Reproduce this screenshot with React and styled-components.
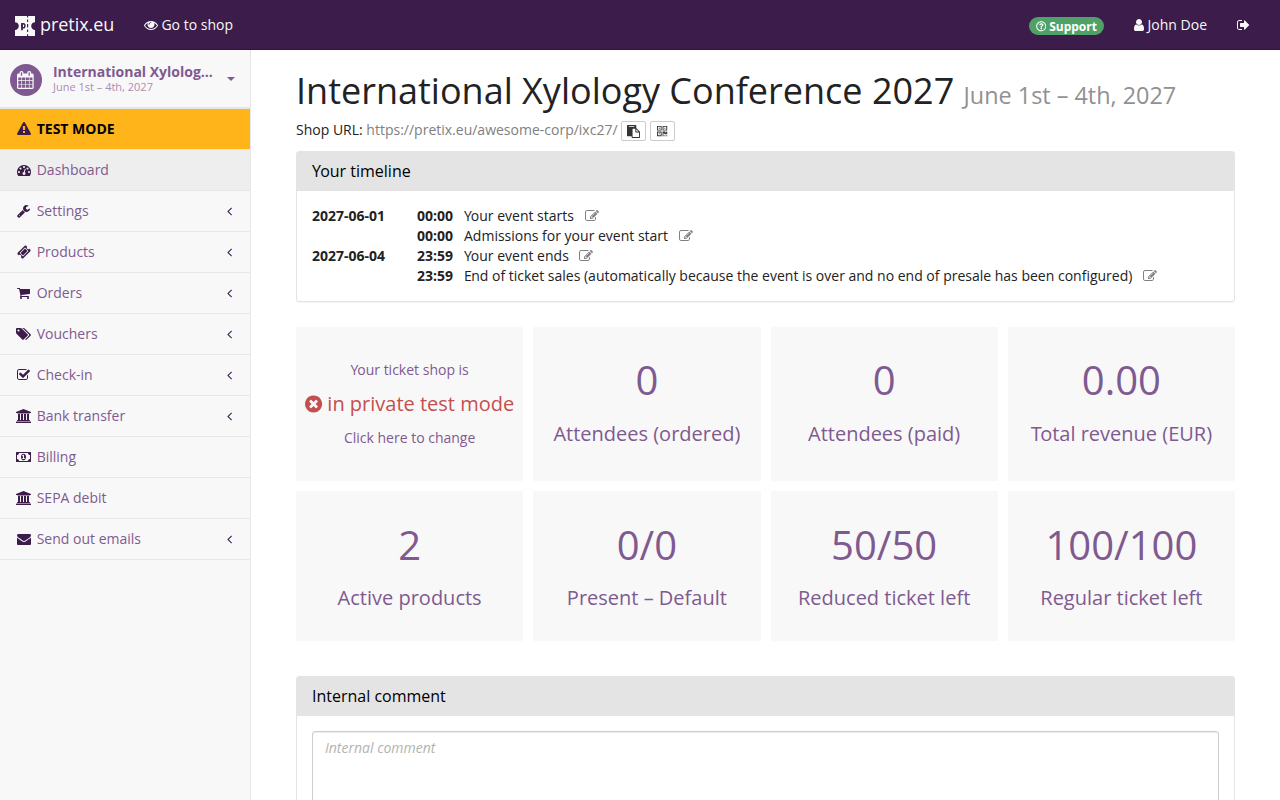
import React from 'react';
import styled, { createGlobalStyle, css } from 'styled-components';
import { FaRegQuestionCircle } from 'react-icons/fa';

const GlobalStyle = createGlobalStyle`
  *, *::before, *::after { box-sizing: border-box; }
  html, body { margin: 0; padding: 0; }
  body {
    font-family: "Open Sans", "Noto Sans", sans-serif;
    font-size: 14px;
    line-height: 20px;
    color: #222;
    background: #fff;
    height: 800px;
    overflow: hidden;
  }
`;

/* Glyphs: [viewBox x, viewBox width, path]; all are 1792 units high. */
const ICONS = {
  eye: [0, 1792, 'M1664 960q-152-236-381-353 61 104 61 225 0 185-131.5 316.5t-316.5 131.5-316.5-131.5-131.5-316.5q0-121 61-225-229 117-381 353 133 205 333.5 326.5t434.5 121.5 434.5-121.5 333.5-326.5zm-720-384q0-20-14-34t-34-14q-125 0-214.5 89.5t-89.5 214.5q0 20 14 34t34 14 34-14 14-34q0-86 61-147t147-61q20 0 34-14t14-34zm848 384q0 34-20 69-140 230-376.5 368.5t-499.5 138.5-499.5-139-376.5-368q-20-35-20-69t20-69q140-229 376.5-368t499.5-139 499.5 139 376.5 368q20 35 20 69z'],
  user: [256, 1280, 'M1536 1399q0 109-62.5 187t-150.5 78h-854q-88 0-150.5-78t-62.5-187q0-85 8.5-160.5t31.5-152 58.5-131 94-89 134.5-34.5q131 128 313 128t313-128q76 0 134.5 34.5t94 89 58.5 131 31.5 152 8.5 160.5zm-256-887q0 159-112.5 271.5t-271.5 112.5-271.5-112.5-112.5-271.5 112.5-271.5 271.5-112.5 271.5 112.5 112.5 271.5z'],
  signOut: [64, 1664, 'M704 1440q0 4 1 20t.5 26.5-3 23.5-10 19.5-20.5 6.5h-320q-119 0-203.5-84.5t-84.5-203.5v-704q0-119 84.5-203.5t203.5-84.5h320q13 0 22.5 9.5t9.5 22.5q0 4 1 20t.5 26.5-3 23.5-10 19.5-20.5 6.5h-320q-66 0-113 47t-47 113v704q0 66 47 113t113 47h312l11.5 1 11.5 3 8 5.5 7 9 2 13.5zm928-544q0 26-19 45l-544 544q-19 19-45 19t-45-19-19-45v-288h-448q-26 0-45-19t-19-45v-384q0-26 19-45t45-19h448v-288q0-26 19-45t45-19 45 19l544 544q19 19 19 45z'],
  warning: [0, 1792, 'M1024 1375v-190q0-14-9.5-23.5t-22.5-9.5h-192q-13 0-22.5 9.5t-9.5 23.5v190q0 14 9.5 23.5t22.5 9.5h192q13 0 22.5-9.5t9.5-23.5zm-2-374l18-459q0-12-10-19-13-11-24-11h-220q-11 0-24 11-10 7-10 21l17 457q0 10 10 16.5t24 6.5h185q14 0 23.5-6.5t10.5-16.5zm-14-934l768 1408q35 63-2 126-17 29-46.5 46t-63.5 17h-1536q-34 0-63.5-17t-46.5-46q-37-63-2-126l768-1408q17-31 47-49t65-18 65 18 47 49z'],
  dashboard: [0, 1792, 'M384 1152q0-53-37.5-90.5t-90.5-37.5-90.5 37.5-37.5 90.5 37.5 90.5 90.5 37.5 90.5-37.5 37.5-90.5zm192-448q0-53-37.5-90.5t-90.5-37.5-90.5 37.5-37.5 90.5 37.5 90.5 90.5 37.5 90.5-37.5 37.5-90.5zm428 481l101-382q6-26-7.5-48.5t-38.5-29.5-48 6.5-30 39.5l-101 382q-60 5-107 43.5t-63 98.5q-20 77 20 146t117 89 146-20 89-117q16-60-6-117t-72-91zm660-33q0-53-37.5-90.5t-90.5-37.5-90.5 37.5-37.5 90.5 37.5 90.5 90.5 37.5 90.5-37.5 37.5-90.5zm-640-640q0-53-37.5-90.5t-90.5-37.5-90.5 37.5-37.5 90.5 37.5 90.5 90.5 37.5 90.5-37.5 37.5-90.5zm448 192q0-53-37.5-90.5t-90.5-37.5-90.5 37.5-37.5 90.5 37.5 90.5 90.5 37.5 90.5-37.5 37.5-90.5zm320 448q0 261-141 483-19 29-54 29h-1402q-35 0-54-29-141-221-141-483 0-182 71-348t191-286 286-191 348-71 348 71 286 191 191 286 71 348z'],
  wrench: [64, 1664, 'M448 1472q0-26-19-45t-45-19-45 19-19 45 19 45 45 19 45-19 19-45zm644-420l-682 682q-37 37-90 37-52 0-91-37l-106-108q-38-36-38-90 0-53 38-91l681-681q39 98 114.5 173.5t173.5 114.5zm634-435q0 39-23 106-47 134-164.5 217.5t-258.5 83.5q-185 0-316.5-131.5t-131.5-316.5 131.5-316.5 316.5-131.5q58 0 121.5 16.5t107.5 46.5q16 11 16 28t-16 28l-293 169v224l193 107q5-3 79-48.5t135.5-81 70.5-35.5q15 0 23.5 10t8.5 25z'],
  ticket: [0, 1792, 'M1024 452l316 316-572 572-316-316zm-211 979l618-618q19-19 19-45t-19-45l-362-362q-18-18-45-18t-45 18l-618 618q-19 19-19 45t19 45l362 362q18 18 45 18t45-18zm889-637l-907 908q-37 37-90.5 37t-90.5-37l-126-126q56-56 56-136t-56-136-136-56-136 56l-125-126q-37-37-37-90.5t37-90.5l907-906q37-37 90.5-37t90.5 37l125 125q-56 56-56 136t56 136 136 56 136-56l126 125q37 37 37 90.5t-37 90.5z'],
  cart: [64, 1664, 'M704 1536q0 52-38 90t-90 38-90-38-38-90 38-90 90-38 90 38 38 90zm896 0q0 52-38 90t-90 38-90-38-38-90 38-90 90-38 90 38 38 90zm128-1088v512q0 24-16.5 42.5t-40.5 21.5l-1044 122q13 60 13 70 0 16-24 64h920q26 0 45 19t19 45-19 45-45 19h-1024q-26 0-45-19t-19-45q0-11 8-31.5t16-36 21.5-40 15.5-29.5l-177-823h-204q-26 0-45-19t-19-45 19-45 45-19h256q16 0 28.5 6.5t19.5 15.5 13 24.5 8 26 5.5 29.5 4.5 26h1201q26 0 45 19t19 45z'],
  tags: [0, 1920, 'M448 448q0-53-37.5-90.5t-90.5-37.5-90.5 37.5-37.5 90.5 37.5 90.5 90.5 37.5 90.5-37.5 37.5-90.5zm1067 576q0 53-37 90l-491 492q-39 37-91 37-53 0-90-37l-715-716q-38-37-64.5-101t-26.5-117v-416q0-52 38-90t90-38h416q53 0 117 26.5t102 64.5l715 714q37 39 37 91zm384 0q0 53-37 90l-491 492q-39 37-91 37-36 0-59-14t-53-45l470-470q37-37 37-90 0-52-37-91l-715-714q-38-38-102-64.5t-117-26.5h224q53 0 117 26.5t102 64.5l715 714q37 39 37 91z'],
  check: [64, 1664, 'M1472 930v318q0 119-84.5 203.5t-203.5 84.5h-832q-119 0-203.5-84.5t-84.5-203.5v-832q0-119 84.5-203.5t203.5-84.5h832q63 0 117 25 15 7 18 23 3 17-9 29l-49 49q-10 10-23 10-3 0-9-2-23-6-45-6h-832q-66 0-113 47t-47 113v832q0 66 47 113t113 47h832q66 0 113-47t47-113v-254q0-13 9-22l64-64q10-10 23-10 6 0 12 3 20 8 20 29zm231-489l-814 814q-24 24-57 24t-57-24l-430-430q-24-24-24-57t24-57l110-110q24-24 57-24t57 24l263 263 647-647q24-24 57-24t57 24l110 110q24 24 24 57t-24 57z'],
  bank: [0, 1920, 'M960 0l960 384v128h-128q0 26-20.5 45t-48.5 19h-1526q-28 0-48.5-19t-20.5-45h-128v-128zm-704 640h256v768h128v-768h256v768h128v-768h256v768h128v-768h256v768h59q28 0 48.5 19t20.5 45v64h-1664v-64q0-26 20.5-45t48.5-19h59v-768zm1595 960q28 0 48.5 19t20.5 45v128h-1920v-128q0-26 20.5-45t48.5-19h1782z'],
  money: [0, 1920, 'M768 1152h384v-96h-128v-448h-114l-148 137 77 80q42-37 55-57h2v288h-128v96zm512-256q0 70-21 142t-59.5 134-101.5 101-138 39-138-39-101.5-101-59.5-134-21-142 21-142 59.5-134 101.5-101 138-39 138 39 101.5 101 59.5 134 21 142zm512 256v-512q-106 0-181-75t-75-181h-1152q0 106-75 181t-181 75v512q106 0 181 75t75 181h1152q0-106 75-181t181-75zm128-832v1152q0 26-19 45t-45 19h-1792q-26 0-45-19t-19-45v-1152q0-26 19-45t45-19h1792q26 0 45 19t19 45z'],
  envelope: [0, 1792, 'M1792 710v794q0 66-47 113t-113 47h-1472q-66 0-113-47t-47-113v-794q44 49 101 87 362 246 497 345 57 42 92.5 65.5t94.5 48 110 24.5h2q51 0 110-24.5t94.5-48 92.5-65.5q170-123 498-345 57-39 100-87zm0-294q0 79-49 151t-122 123q-376 261-468 325-10 7-42.5 31t-54 38.5-52 32.5-57.5 27-50 9h-2q-23 0-50-9t-57.5-27-52-32.5-54-38.5-42.5-31q-91-64-262-182.5t-205-142.5q-62-42-117-115.5t-55-136.5q0-78 41.5-130t118.5-52h1472q65 0 112.5 47t47.5 113z'],
  angleLeft: [576, 640, 'M1203 544q0 13-10 23l-393 393 393 393q10 10 10 23t-10 23l-50 50q-10 10-23 10t-23-10l-466-466q-10-10-10-23t10-23l466-466q10-10 23-10t23 10l50 50q10 10 10 23z'],
  edit: [0, 1792, 'M888 1184l116-116-152-152-116 116v56h96v96h56zm440-720q-16-16-33 1l-350 350q-17 17-1 33t33-1l350-350q17-17 1-33zm80 594v190q0 119-84.5 203.5t-203.5 84.5h-832q-119 0-203.5-84.5t-84.5-203.5v-832q0-119 84.5-203.5t203.5-84.5h832q63 0 117 25 15 7 18 23 3 17-9 29l-49 49q-14 14-32 8-23-6-45-6h-832q-66 0-113 47t-47 113v832q0 66 47 113t113 47h832q66 0 113-47t47-113v-126q0-13 9-22l64-64q15-15 35-7t20 29zm-96-738l288 288-672 672h-288v-288zm444 132l-92 92-288-288 92-92q28-28 68-28t68 28l152 152q28 28 28 68t-28 68z'],
  timesCircle: [128, 1536, 'M1277 1122q0-26-19-45l-181-181 181-181q19-19 19-45 0-27-19-46l-90-90q-19-19-46-19-26 0-45 19l-181 181-181-181q-19-19-45-19-27 0-46 19l-90 90q-19 19-19 46 0 26 19 45l181 181-181 181q-19 19-19 45 0 27 19 46l90 90q19 19 46 19 26 0 45-19l181-181 181 181q19 19 45 19 27 0 46-19l90-90q19-19 19-46zm387-226q0 209-103 385.5t-279.5 279.5-385.5 103-385.5-103-279.5-279.5-103-385.5 103-385.5 279.5-279.5 385.5-103 385.5 103 279.5 279.5 103 385.5z'],
  calendar: [64, 1664, 'M192 1664h288v-288h-288v288zm352 0h320v-288h-320v288zm-352-352h288v-320h-288v320zm352 0h320v-320h-320v320zm-352-384h288v-288h-288v288zm736 736h320v-288h-320v288zm-384-736h320v-288h-320v288zm768 736h288v-288h-288v288zm-384-352h320v-320h-320v320zm-352-864v-288q0-13-9.5-22.5t-22.5-9.5h-64q-13 0-22.5 9.5t-9.5 22.5v288q0 13 9.5 22.5t22.5 9.5h64q13 0 22.5-9.5t9.5-22.5zm736 864h288v-320h-288v320zm-384-384h320v-288h-320v288zm384 0h288v-288h-288v288zm32-480v-288q0-13-9.5-22.5t-22.5-9.5h-64q-13 0-22.5 9.5t-9.5 22.5v288q0 13 9.5 22.5t22.5 9.5h64q13 0 22.5-9.5t9.5-22.5zm384-64v1280q0 52-38 90t-90 38h-1408q-52 0-90-38t-38-90v-1280q0-52 38-90t90-38h128v-96q0-66 47-113t113-47h64q66 0 113 47t47 113v96h384v-96q0-66 47-113t113-47h64q66 0 113 47t47 113v96h128q52 0 90 38t38 90z'],
  paste: [0, 1792, 'M768 1664h896v-640h-416q-40 0-68-28t-28-68v-416h-384v1152zm256-1440v-64q0-13-9.5-22.5t-22.5-9.5h-704q-13 0-22.5 9.5t-9.5 22.5v64q0 13 9.5 22.5t22.5 9.5h704q13 0 22.5-9.5t9.5-22.5zm256 672h299l-299-299v299zm512 128v672q0 40-28 68t-68 28h-960q-40 0-68-28t-28-68v-160h-544q-40 0-68-28t-28-68v-1344q0-40 28-68t68-28h1088q40 0 68 28t28 68v328q21 13 36 28l408 408q28 28 48 76t20 88z'],
  qrcode: [192, 1408, 'M576 1152v128h-128v-128h128zm0-768v128h-128v-128h128zm768 0v128h-128v-128h128zm-1024 1023h384v-383h-384v383zm0-767h384v-384h-384v384zm768 0h384v-384h-384v384zm-256 256v640h-640v-640h640zm512 512v128h-128v-128h128zm256 0v128h-128v-128h128zm0-512v384h-384v-128h-128v384h-128v-640h384v128h128v-128h128zm-768-768v640h-640v-640h640zm768 0v640h-640v-640h640z'],
};

const Svg = styled.svg`
  flex: none;
  fill: currentColor;
  overflow: visible;
  vertical-align: ${(p) => -p.$size / 7}px;
`;

function Icon({ name, size = 14 }) {
  const [x, w, d] = ICONS[name];
  return (
    <Svg $size={size} width={(w / 1792) * size} height={size} viewBox={`${x} 0 ${w} 1792`} aria-hidden="true">
      <path d={d} />
    </Svg>
  );
}

const kernFirst = css`
  &::first-letter {
    letter-spacing: ${(p) => (p.$kern ? `-${p.$kern}px` : 'normal')};
  }
`;

const TopBar = styled.header`
  height: 50px;
  display: flex;
  align-items: center;
  background: #3b1c4a;
  border-bottom: 1px solid #2e1639;
  color: #f8f8f8;
  padding: 0 30px 0 15px;
`;

const Brand = styled.a`
  display: flex;
  align-items: center;
  gap: 5px;
  font-size: 18px;
  margin: 3px 29.6px 0 0;
`;

const BrandText = styled.span`
  margin-top: -4px;
  letter-spacing: -0.06px;
`;

const TopLink = styled.a`
  white-space: nowrap;
  margin-left: ${(p) => p.$gap || 0}px;
`;

const Spacer = styled.div`
  flex: 1;
`;

const SupportBadge = styled.span`
  display: flex;
  align-items: center;
  gap: 3px;
  height: 18px;
  margin-top: 3px;
  padding: 1px 7px 0;
  border-radius: 9px;
  background: #50a167;
  color: #fff;
  font-size: 12px;
  font-weight: 700;
`;

const Body = styled.div`
  display: flex;
  height: 750px;
`;

const Sidebar = styled.nav`
  flex: none;
  width: 251px;
  background: #f8f8f8;
  border-right: 1px solid #e7e7e7;
`;

const EventSwitch = styled.a`
  display: flex;
  align-items: center;
  height: 59px;
  padding: 0 15px 0 9.6px;
  border-bottom: 2px solid #e7e7e7;
  color: #7f5a91;
`;

const EventBadge = styled.span`
  display: flex;
  align-items: center;
  justify-content: center;
  width: 32px;
  height: 32px;
  margin-top: 2px;
  border-radius: 50%;
  background: #7f5a91;
  color: #f8f8f8;
`;

const EventInfo = styled.span`
  flex: 1;
  display: flex;
  flex-direction: column;
  margin-left: 11.4px;
`;

const EventName = styled.strong`
  line-height: 16px;
`;

const EventDate = styled.span`
  font-size: 11px;
  line-height: 14px;
  color: #a88fb6;
`;

const Caret = styled.span`
  border: 4px solid transparent;
  border-top-color: #7f5a91;
  border-bottom: 0;
`;

const NavItem = styled.a`
  display: flex;
  align-items: center;
  height: 41px;
  padding: 0 18px 0 15px;
  border-bottom: 1px solid #e7e7e7;
  background: ${(p) => (p.$test ? '#ffb419' : p.$active ? '#eeeeee' : 'transparent')};
  color: ${(p) => (p.$test ? '#000' : '#7f5a91')};
  font-weight: ${(p) => (p.$test ? 700 : 400)};
`;

const NavIcon = styled.span`
  display: flex;
  justify-content: center;
  width: 18px;
  padding-right: ${(p) => (p.$odd ? 1 : 0)}px;
  margin-right: 3.7px;
  color: #3b1c4a;
`;

const NavLabel = styled.span`
  flex: 1;
`;

const NavArrow = styled.span`
  display: flex;
  color: #3b1c4a;
`;

const Main = styled.main`
  flex: 1;
  padding: 21px 45px 0;
`;

const Title = styled.h1`
  margin: 0;
  font-size: 36px;
  line-height: 40px;
  font-weight: 400;
  white-space: nowrap;
`;

const TitleDate = styled.small`
  font-size: 23.4px;
  color: #919191;
`;

const ShopUrl = styled.div`
  display: flex;
  align-items: center;
  height: 20px;
  margin: 9px 0 10px;
  white-space: pre;
`;

const UrlLink = styled.a`
  color: #808080;
  margin-right: 3px;
`;

const SmallButton = styled.button`
  display: flex;
  align-items: center;
  justify-content: center;
  width: 25px;
  height: 20px;
  margin: 2px 4px 0 0;
  padding: 0;
  border: 1px solid #ccc;
  border-radius: 2px;
  background: #fff;
  color: #333;
`;

const PageHead = styled.div`
  height: 80px;
  display: flex;
  flex-direction: column;
  justify-content: space-between;

  ${ShopUrl} {
    margin: 0 0 10.6px;
  }
`;

const Panel = styled.section`
  border: 1px solid #e4e4e4;
  border-radius: 3px;
  box-shadow: 0 1px 1px rgba(0, 0, 0, 0.05);
  background: #fff;
`;

const PanelHeading = styled.h2`
  margin: 0;
  height: 39px;
  padding: 0 15px;
  background: #e4e4e4;
  color: #000;
  font-size: 16px;
  font-weight: 400;
  line-height: 38px;
  ${kernFirst}
`;

const PanelBody = styled.div`
  padding: 15px;
`;

const TimelineRow = styled.div`
  display: grid;
  grid-template-columns: 105px 47px 1fr;
  height: 20px;
`;

const TimelineText = styled.span`
  white-space: nowrap;
  ${kernFirst}
`;

const EditLink = styled.a`
  margin-left: 10.6px;
  color: #808080;
`;

const Tiles = styled.div`
  display: grid;
  grid-template-columns: repeat(4, 1fr);
  grid-template-rows: 154.3px 150px;
  gap: 10px;
  margin: 24.6px 0 35.1px;
`;

const Tile = styled.a`
  display: flex;
  flex-direction: column;
  align-items: center;
  padding-top: ${(p) => (p.$status ? 33.4 : 24.8)}px;
  background: #f8f8f8;
  color: #7f5a91;
  white-space: nowrap;
`;

const TileNumber = styled.span`
  font-size: 40px;
  line-height: 57px;
`;

const TileLabel = styled.span`
  margin-top: 10.2px;
  font-size: 20px;
  line-height: 29px;
  ${kernFirst}
`;

const StateCaption = styled.span`
  ${kernFirst}
`;

const ShopState = styled.span`
  margin: 10px 0;
  font-size: 20px;
  line-height: 28px;
  color: #c44f4f;
`;

const Comment = styled.textarea`
  display: block;
  width: 100%;
  height: 120px;
  padding: 6px 12px;
  border: 1px solid #ccc;
  border-radius: 3px;
  box-shadow: inset 0 1px 1px rgba(0, 0, 0, 0.075);
  font: inherit;
  resize: none;
  &::placeholder {
    color: #b3b3b3;
    font-style: italic;
    opacity: 1;
  }
`;

const NAV = [
  ['warning', 'TEST MODE', false],
  ['dashboard', 'Dashboard', false],
  ['wrench', 'Settings', true],
  ['ticket', 'Products', true],
  ['cart', 'Orders', true],
  ['tags', 'Vouchers', true],
  ['check', 'Check-in', true],
  ['bank', 'Bank transfer', true],
  ['money', 'Billing', false],
  ['bank', 'SEPA debit', false],
  ['envelope', 'Send out emails', true],
];

const TIMELINE = [
  ['2027-06-01', '00:00', 'Your event starts', 1],
  ['', '00:00', 'Admissions for your event start', 0],
  ['2027-06-04', '23:59', 'Your event ends', 1],
  ['', '23:59', 'End of ticket sales (automatically because the event is over and no end of presale has been configured)', 0.6],
];

const STATS = [
  ['0', 'Attendees (ordered)'],
  ['0', 'Attendees (paid)'],
  ['0.00', 'Total revenue (EUR)', 1.5],
  ['2', 'Active products'],
  ['0/0', 'Present – Default'],
  ['50/50', 'Reduced ticket left'],
  ['100/100', 'Regular ticket left'],
];

/* Ticket with notched sides, a bowl-and-stem mark and a perforation line. */
function Logo() {
  return (
    <svg width="20" height="20" viewBox="0 0 20 20" aria-hidden="true">
      <path fill="#f8f8f8" d="M0 0H20V6.2C17.9 6.2 16.2 7.9 16.2 10S17.9 14 20 14V20H0V14C2.1 14 3.8 12.1 3.8 10S2.1 6.2 0 6.2Z" />
      <path stroke="#3b1c4a" strokeWidth="1.1" d="M12.6 0V1.6M12.6 3.4V6M12.6 8V11.4M12.6 13.4V16M12.6 18.2V20" />
      <path stroke="#3b1c4a" strokeWidth="1.7" fill="none" d="M7 7V14.2" />
      <ellipse cx="8.4" cy="9.8" rx="1.5" ry="2.1" stroke="#3b1c4a" strokeWidth="1.4" fill="none" />
    </svg>
  );
}

export default function App() {
  return (
    <>
      <GlobalStyle />
      <TopBar>
        <Brand><Logo /><BrandText>pretix.eu</BrandText></Brand>
        <TopLink><Icon name="eye" /> Go to shop</TopLink>
        <Spacer />
        <SupportBadge><FaRegQuestionCircle size={10.5} />Support</SupportBadge>
        <TopLink $gap={30}><Icon name="user" /> John Doe</TopLink>
        <TopLink $gap={30}><Icon name="signOut" /></TopLink>
      </TopBar>
      <Body>
        <Sidebar>
          <EventSwitch>
            <EventBadge><Icon name="calendar" size={18} /></EventBadge>
            <EventInfo>
              <EventName>International Xylolog…</EventName>
              <EventDate>June 1st – 4th, 2027</EventDate>
            </EventInfo>
            <Caret />
          </EventSwitch>
          {NAV.map(([icon, label, arrow], i) => (
            <NavItem key={label} $test={i === 0} $active={i === 1}>
              <NavIcon $odd={ICONS[icon][1] !== 1792}><Icon name={icon} /></NavIcon>
              <NavLabel>{label}</NavLabel>
              {arrow && <NavArrow><Icon name="angleLeft" /></NavArrow>}
            </NavItem>
          ))}
        </Sidebar>
        <Main>
          <PageHead>
            <Title>International Xylology Conference 2027 <TitleDate>June 1st – 4th, 2027</TitleDate></Title>
            <ShopUrl>
              {'Shop URL: '}
              <UrlLink>https://pretix.eu/awesome-corp/ixc27/</UrlLink>
              <SmallButton aria-label="Copy"><Icon name="paste" size={13} /></SmallButton>
              <SmallButton aria-label="QR code"><Icon name="qrcode" size={13} /></SmallButton>
            </ShopUrl>
          </PageHead>
          <Panel>
            <PanelHeading $kern={0.8}>Your timeline</PanelHeading>
            <PanelBody>
              {TIMELINE.map(([date, time, text, kern]) => (
                <TimelineRow key={text}>
                  <strong>{date}</strong>
                  <strong>{time}</strong>
                  <TimelineText $kern={kern}>{text}<EditLink><Icon name="edit" /></EditLink></TimelineText>
                </TimelineRow>
              ))}
            </PanelBody>
          </Panel>
          <Tiles>
            <Tile $status>
              <StateCaption $kern={1}>Your ticket shop is</StateCaption>
              <ShopState><Icon name="timesCircle" size={20} /> in private test mode</ShopState>
              <StateCaption>Click here to change</StateCaption>
            </Tile>
            {STATS.map(([value, label, kern]) => (
              <Tile key={label}>
                <TileNumber>{value}</TileNumber>
                <TileLabel $kern={kern}>{label}</TileLabel>
              </Tile>
            ))}
          </Tiles>
          <Panel>
            <PanelHeading>Internal comment</PanelHeading>
            <PanelBody>
              <Comment placeholder="Internal comment" />
            </PanelBody>
          </Panel>
        </Main>
      </Body>
    </>
  );
}
